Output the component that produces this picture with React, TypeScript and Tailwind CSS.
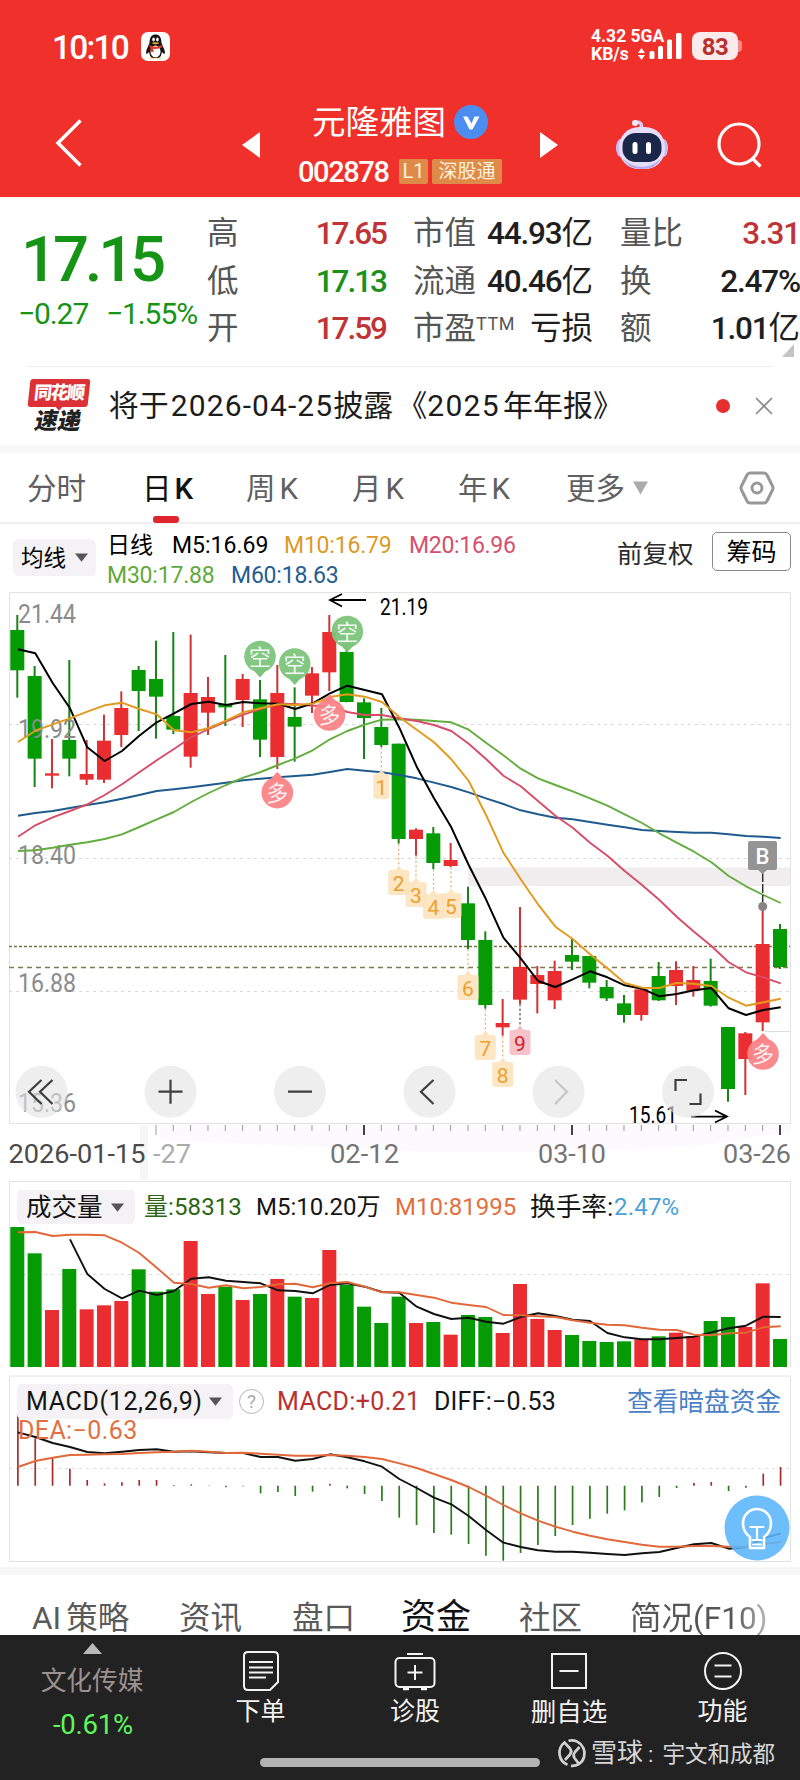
import React from "react";

type Candle = [number, number, number, number, number];

const GREEN = "#049b04";
const RED = "#ea2d30";
const STEP = 17.334;
const cx = (i: number) => 17.3 + STEP * i;

/* up flag, wick top, body top, body bottom, wick bottom (thirds of a pixel) */
const candles: Candle[] = [
  [0, 90, 135, 256, 338], [0, 243, 273, 521, 606], [1, 462, 565, 572, 610], [0, 225, 465, 521, 574],
  [1, 465, 567, 584, 600], [1, 389, 467, 584, 594], [1, 319, 369, 450, 486], [0, 243, 255, 318, 438],
  [0, 167, 282, 335, 461], [0, 141, 393, 434, 447], [1, 149, 324, 515, 548], [1, 276, 336, 383, 450],
  [0, 210, 358, 367, 423], [1, 267, 282, 345, 426], [0, 285, 343, 464, 516], [1, 240, 324, 516, 552],
  [0, 307, 396, 425, 530], [1, 246, 265, 332, 384], [1, 90, 141, 262, 318], [0, 190, 201, 351, 352],
  [0, 340, 352, 399, 522], [0, 369, 426, 480, 486], [0, 476, 476, 762, 776], [1, 730, 734, 762, 812],
  [0, 726, 745, 834, 852], [1, 774, 825, 843, 846], [0, 905, 955, 1065, 1092], [0, 1039, 1065, 1260, 1271],
  [1, 1242, 1314, 1327, 1352], [1, 966, 1146, 1244, 1257], [1, 1143, 1170, 1197, 1285], [1, 1127, 1158, 1246, 1272],
  [0, 1062, 1110, 1130, 1155], [0, 1113, 1113, 1193, 1210], [0, 1185, 1206, 1240, 1248], [0, 1230, 1255, 1290, 1313],
  [1, 1213, 1213, 1290, 1307], [0, 1131, 1173, 1246, 1248], [1, 1129, 1155, 1203, 1260], [1, 1143, 1185, 1217, 1235],
  [0, 1121, 1188, 1262, 1265], [0, 1326, 1326, 1512, 1550], [1, 1341, 1345, 1422, 1530], [1, 966, 1077, 1312, 1338],
  [0, 1017, 1032, 1146, 1152],
];

const m5 = [193, 205, 294, 370, 487, 528, 498, 452, 412, 385, 357, 350, 360, 351, 355, 356, 372, 355, 325, 302, 315, 328, 428, 545, 640, 727, 840, 943, 1058, 1120, 1188, 1206, 1183, 1159, 1177, 1201, 1211, 1234, 1227, 1216, 1209, 1270, 1290, 1275, 1267];
const m10 = [471, 437, 418, 400, 380, 361, 353, 372, 388, 436, 442, 429, 407, 382, 370, 358, 360, 356, 336, 328, 335, 351, 396, 434, 472, 523, 588, 690, 803, 883, 958, 1025, 1062, 1108, 1150, 1194, 1208, 1209, 1194, 1196, 1203, 1238, 1262, 1252, 1241];
const m20 = [755, 721, 697, 678, 658, 630, 598, 562, 526, 492, 457, 432, 410, 389, 372, 356, 357, 362, 362, 381, 390, 390, 400, 408, 420, 438, 476, 522, 572, 604, 648, 692, 728, 773, 812, 858, 900, 945, 995, 1040, 1083, 1132, 1162, 1177, 1195];
const m30 = [798, 796, 788, 779, 772, 762, 748, 726, 703, 681, 651, 624, 600, 578, 561, 540, 520, 496, 463, 438, 419, 404, 403, 404, 408, 412, 434, 473, 511, 551, 580, 600, 619, 640, 662, 688, 714, 745, 773, 800, 832, 873, 904, 930, 954];
const m60 = [692, 684, 678, 669, 660, 652, 641, 630, 618, 613, 607, 600, 593, 586, 581, 577, 573, 569, 561, 552, 557, 562, 570, 580, 593, 606, 622, 640, 657, 676, 688, 698, 703, 711, 719, 727, 735, 738, 741, 743, 743, 748, 753, 755, 759];

const volume = [171, 250, 420, 297, 418, 406, 393, 298, 365, 358, 213, 372, 350, 390, 372, 327, 380, 384, 240, 345, 410, 459, 380, 459, 456, 494, 435, 441, 489, 342, 447, 480, 495, 513, 516, 514, 508, 499, 488, 498, 453, 441, 471, 340, 507];
const vol5 = [208, 312, 357, 385, 362, 375, 363, 326, 322, 332, 336, 340, 361, 363, 370, 345, 340, 350, 366, 368, 410, 432, 447, 443, 455, 461, 441, 430, 438, 449, 453, 489, 502, 508, 508, 504, 500, 487, 475, 467, 440, 441];
const vol10 = [187, 186, 198, 194, 194, 196, 218, 249, 293, 338, 342, 353, 346, 355, 351, 343, 341, 352, 340, 336, 350, 367, 367, 375, 383, 398, 405, 411, 435, 436, 439, 441, 451, 458, 464, 466, 473, 479, 480, 494, 496, 490, 488, 472, 469];

const macd = [733, 805, 862, 896, 930, 940, 937, 930, 930, 945, 943, 946, 952, 949, 970, 966, 978, 965, 941, 955, 972, 993, 1043, 1065, 1089, 1094, 1122, 1157, 1172, 1149, 1125, 1098, 1065, 1046, 1031, 1021, 997, 981, 954, 939, 936, 963, 953, 911, 891];
const diff = [787, 801, 819, 831, 846, 850, 845, 840, 838, 845, 844, 847, 849, 849, 861, 861, 872, 867, 853, 862, 874, 890, 927, 954, 983, 1003, 1038, 1080, 1118, 1131, 1141, 1145, 1145, 1148, 1152, 1155, 1150, 1146, 1134, 1123, 1119, 1136, 1132, 1105, 1090];
const dea = [891, 873, 863, 855, 854, 853, 852, 849, 847, 845, 842, 845, 849, 848, 851, 854, 857, 857, 855, 857, 861, 867, 880, 894, 912, 930, 951, 977, 1005, 1030, 1052, 1070, 1085, 1097, 1108, 1116, 1124, 1130, 1130, 1128, 1128, 1130, 1130, 1122, 1116];

const pts = (base: number, data: number[], start = 0) =>
  data.map((v, i) => `${(cx(i + start) + 0.7).toFixed(1)},${(base + v / 3).toFixed(1)}`).join(" ");

function Line({ base, data, color, start = 0, w = 1.9 }: { base: number; data: number[]; color: string; start?: number; w?: number }) {
  return <polyline points={pts(base, data, start)} fill="none" stroke={color} strokeWidth={w} strokeLinejoin="round" />;
}

function Label({ x, y, w, size = 25, fill = "#8b8b8b", children }: { x: number; y: number; w: number; size?: number; fill?: string; children: string }) {
  return (
    <text x={x} y={y} fontSize={size} fill={fill} textLength={w} lengthAdjust="spacingAndGlyphs">
      {children}
    </text>
  );
}

function Bubble({ x, y, text, up = false }: { x: number; y: number; text: string; up?: boolean }) {
  const fill = up ? "#fa8488" : "#7cc47c";
  return (
    <g>
      <path d={up ? `M${x - 8} ${y - 12}L${x} ${y - 21}L${x + 8} ${y - 12}Z` : `M${x - 8} ${y + 12}L${x} ${y + 21}L${x + 8} ${y + 12}Z`} fill={fill} />
      <circle cx={x} cy={y} r="15.8" fill={fill} opacity="0.95" />
      <text x={x} y={y + 8} fontSize="22" fill="#fff" opacity="0.9" textAnchor="middle">{text}</text>
    </g>
  );
}

function Tag({ x, y, n, from, w = 21, hot = false }: { x: number; y: number; n: string; from: number; w?: number; hot?: boolean }) {
  return (
    <g>
      <path d={`M${x} ${from}V${y}`} stroke={hot ? "#555" : "#dfb88a"} strokeWidth="1.2" strokeDasharray="2.5 2" />
      <path
        d={`M${x} ${y - 3}L${x + 4} ${y + 1}H${x + w / 2 - 2}Q${x + w / 2} ${y + 1} ${x + w / 2} ${y + 3}V${y + 23}Q${x + w / 2} ${y + 26} ${x + w / 2 - 3} ${y + 26}H${x - w / 2 + 3}Q${x - w / 2} ${y + 26} ${x - w / 2} ${y + 23}V${y + 3}Q${x - w / 2} ${y + 1} ${x - w / 2 + 2} ${y + 1}H${x - 4}Z`}
        fill={hot ? "#f6bcc4" : "#fde3bd"} opacity="0.9"
      />
      <text x={x} y={y + 22} fontSize="21" fill={hot ? "#c8242c" : "#eda02c"} textAnchor="middle">{n}</text>
    </g>
  );
}

function Tri({ className }: { className: string }) {
  return (
    <svg viewBox="0 0 14 12" preserveAspectRatio="none" className={className} fill="currentColor">
      <path d="M0 0.5H14L7 11.5Z" />
    </svg>
  );
}

function StatusBar() {
  return (
    <div className="flex h-[86px] items-start pt-[29px] text-white">
      <div className="ml-[52px] mt-[2px] w-[89px] whitespace-nowrap text-[33.500px] font-medium leading-[34px] tracking-[-1.8px]">10:10</div>
      <svg viewBox="0 0 29 29" className="mt-[3px] h-[29px] w-[29px]">
        <rect width="29" height="29" rx="7" fill="#fff" />
        <path d="M8.5 11C8.500 5 11 2.500 14.500 2.500S20.500 5 20.500 11L23.500 18Q24.500 22 23 22L21 20Q20.500 24 18 26H11Q8.500 24 8 20L6 22Q4.500 22 5.500 18Z" fill="#141414" />
        <ellipse cx="14.500" cy="19.500" rx="5" ry="6" fill="#fff" />
        <ellipse cx="12.600" cy="7.500" rx="1.300" ry="2" fill="#fff" />
        <ellipse cx="16.400" cy="7.500" rx="1.300" ry="2" fill="#fff" />
        <path d="M10.500 11Q14.500 9.500 18.500 11Q14.500 13.500 10.500 11Z" fill="#f6b21b" />
        <path d="M8 13Q14.500 16.500 21 13L21.500 15Q17 17.500 12.500 16.800V20H9.500V16Z" fill="#e23a30" />
        <path d="M8 26.500Q11 24.500 14 26.500ZM15 26.500Q18 24.500 21 26.500Z" fill="#f6b21b" />
      </svg>
      <div className="-mt-[1px] ml-[421px] w-[46px] whitespace-nowrap text-[17.500px] font-bold leading-[17px]">
        <div>4.32 5GA</div>
        <div className="mt-[1px]">KB/s</div>
      </div>
      <svg viewBox="0 0 48 32" className="h-[32px] w-[48px]" fill="#fff">
        <path d="M4.500 19L8 24H1ZM4.500 31L8 26H1Z" />
        <rect x="12.500" y="22" width="5" height="8" rx="1.500" />
        <rect x="21" y="17" width="5" height="13" rx="1.500" />
        <rect x="30" y="10.500" width="5" height="19.500" rx="1.500" />
        <rect x="39" y="4" width="5.500" height="26" rx="1.500" />
      </svg>
      <div className="ml-[7px] mt-[3px] flex items-center">
        <div className="flex h-[28px] w-[46px] items-center justify-center rounded-[8px] bg-[#fdeaea] pt-[1px] text-[24px] font-bold leading-none tracking-[-0.5px] text-[#b9302f]">83</div>
        <div className="h-[12px] w-[4px] rounded-r-full bg-[#f58a88]" />
      </div>
    </div>
  );
}

function TitleBar() {
  return (
    <div className="flex h-[111px] items-start text-white">
      <svg viewBox="0 0 28 50" className="ml-[55px] mt-[32px] h-[50px] w-[28px]" fill="none" stroke="#fff" strokeWidth="3.500">
        <path d="M25.500 2.500L3 25L25.500 47.500" />
      </svg>
      <svg viewBox="0 0 18 26" className="ml-[159px] mt-[46px] h-[26px] w-[18px]" fill="#fff"><path d="M18 0V26L0 13Z" /></svg>
      <div className="ml-[38px] flex w-[210px] flex-col">
        <div className="ml-[14px] mt-[18px] flex items-center">
          <div className="w-[142px] whitespace-nowrap pt-[2px] text-[33.500px] leading-[34px]">元隆雅图</div>
          <svg viewBox="0 0 34 34" className="h-[34px] w-[34px]">
            <circle cx="17" cy="17" r="17" fill="#4c8df0" />
            <path d="M9 11.500H13.500L17.500 18.500L20.500 11.500H25.500L18.500 24.500H15.500Z" fill="#fff" />
          </svg>
        </div>
        <div className="mt-[16px] flex items-center">
          <div className="w-[101px] whitespace-nowrap pt-[2px] text-[29px] font-medium leading-[28px] tracking-[-1.4px]">002878</div>
          <div className="flex h-[25px] w-[29px] items-center justify-center rounded-[2px] bg-[#de8b49] text-[20px] leading-none text-[#fff1dc]">L1</div>
          <div className="ml-[4px] flex h-[25px] w-[70px] items-center justify-center whitespace-nowrap rounded-[2px] bg-[#de8b49] text-[19px] leading-none text-[#fff1dc]">深股通</div>
        </div>
      </div>
      <svg viewBox="0 0 18 26" className="ml-[32px] mt-[46px] h-[26px] w-[18px]" fill="#fff"><path d="M0 0V26L18 13Z" /></svg>
      <svg viewBox="0 0 54 52" className="ml-[57px] mt-[33px] h-[52px] w-[54px]">
        <path d="M26 9Q28 3 21 3" fill="none" stroke="#d9cdf5" strokeWidth="3.500" strokeLinecap="round" />
        <circle cx="20" cy="4" r="3" fill="#f3ecff" />
        <ellipse cx="5.500" cy="29" rx="4.500" ry="9" fill="#c9bdf0" />
        <ellipse cx="48.500" cy="29" rx="4.500" ry="9" fill="#c9bdf0" />
        <rect x="4" y="8" width="46" height="42" rx="20" fill="#e4ddfc" />
        <path d="M8 40Q27 56 46 40Q40 50 27 50T8 40Z" fill="#b8a8f0" />
        <rect x="7.500" y="14" width="39" height="29" rx="13" fill="#1b2749" />
        <rect x="17.500" y="23" width="5" height="12" rx="2.500" fill="#fff" />
        <rect x="31" y="23" width="5" height="12" rx="2.500" fill="#fff" />
      </svg>
      <svg viewBox="0 0 48 48" className="ml-[47px] mt-[35px] h-[48px] w-[48px]" fill="none" stroke="#fff" strokeWidth="3.200">
        <circle cx="23" cy="23" r="20" />
        <path d="M36 37L44.500 45.500" />
      </svg>
    </div>
  );
}

const rows = [
  { a: "高", av: "17.65", ac: "text-[#c03437]", b: "市值", bv: "44.93", bu: "亿", c: "量比", cv: "3.31", cu: "", cc: "text-[#c03437]" },
  { a: "低", av: "17.13", ac: "text-[#1b911b]", b: "流通", bv: "40.46", bu: "亿", c: "换", cv: "2.47%", cu: "", cc: "text-[#1f1f1f]" },
  { a: "开", av: "17.59", ac: "text-[#c03437]", b: "市盈", bv: "", bu: "亏损", c: "额", cv: "1.01", cu: "亿", cc: "text-[#1f1f1f]", ttm: true },
];

function Quote() {
  return (
    <div className="relative flex h-[169px] items-start">
      <div className="w-[207px] text-[#169416]">
        <div className="ml-[21px] mt-[30px] whitespace-nowrap text-[63.500px] font-medium leading-[66px] tracking-[-4.2px]">17.15</div>
        <div className="ml-[18px] mt-[5px] flex whitespace-nowrap text-[30px] leading-[32px] tracking-[-1.1px]">
          <div className="w-[88px]">−0.27</div>
          <div>−1.55%</div>
        </div>
      </div>
      <div className="mt-[13px]">
        {rows.map((r) => (
          <div key={r.a} className="flex h-[47.500px] items-center whitespace-nowrap text-[31.500px] leading-none text-[#1f1f1f]">
            <div className="w-[80px] text-[#555]">{r.a}</div>
            <div className={`w-[99px] text-right font-medium tracking-[-2px] ${r.ac}`}>{r.av}</div>
            <div className="ml-[27px] flex w-[70px] text-[#555]">
              {r.b}
              {r.ttm && <span className="text-[18px] leading-[22px] tracking-[0.5px]">TTM</span>}
            </div>
            <div className="w-[110px] text-right">
              <span className="font-medium tracking-[-1.2px]">{r.bv}</span>
              {r.bu}
            </div>
            <div className="ml-[27px] w-[64px] text-[#555]">{r.c}</div>
            <div className={`w-[116px] text-right ${r.cc}`}>
              <span className="font-medium tracking-[-1.2px]">{r.cv}</span>
              {r.cu}
            </div>
          </div>
        ))}
      </div>
      <svg viewBox="0 0 12 13" className="absolute left-[782px] top-[147px] h-[13px] w-[12px]"><path d="M12 0V13H0Z" fill="#c4c4c4" /></svg>
    </div>
  );
}

function Notice() {
  return (
    <div className="mx-[27px] flex h-[79px] items-start border-t border-[#eee]">
      <div className="mt-[12px] flex w-[64px] flex-col items-center">
        <div className="flex h-[28px] w-[60px] -skew-x-6 items-center justify-center rounded-[3px] bg-[#dc3237] text-[18px] font-black leading-none tracking-[-1.5px] text-white">同花顺</div>
        <Tri className="-mt-[1px] h-[5px] w-[8px] text-[#dc3237]" />
        <div className="-ml-[2px] -skew-x-12 whitespace-nowrap text-[23px] font-black leading-[22px] text-[#222]">速递</div>
      </div>
      <div className="ml-[18px] mt-[22px] w-[609px] whitespace-nowrap text-[30px] leading-[34px] text-[#1c1c1c]">
        将于<span className="ml-[2px] tracking-[1.1px]">2026-04-25</span>披露<span className="ml-[4px]">《</span><span className="tracking-[1.3px]">2025</span><span className="ml-[3px]">年年报》</span>
      </div>
      <div className="mt-[32px] h-[14px] w-[14px] shrink-0 rounded-full bg-[#e62e2e]" />
      <svg viewBox="0 0 18 18" className="ml-[25px] mt-[30px] h-[18px] w-[18px] shrink-0" stroke="#8a8a8a" strokeWidth="1.700"><path d="M1 1L17 17M17 1L1 17" /></svg>
    </div>
  );
}

function PeriodTabs() {
  return (
    <div className="flex h-[71px] items-start whitespace-nowrap border-b-2 border-[#f0f0f0] pt-[19px] text-[29.500px] leading-[34px] text-[#606060]">
      <div className="ml-[27px] w-[115px]">分时</div>
      <div className="w-[104px] text-[#111]">
        日<span className="ml-[3px] font-medium">K</span>
        <div className="ml-[11px] mt-[10px] h-[7px] w-[26px] rounded-[3px] bg-[#dd262e]" />
      </div>
      <div className="w-[106px]">周<span className="ml-[4px]">K</span></div>
      <div className="w-[106px]">月<span className="ml-[4px]">K</span></div>
      <div className="w-[108px]">年<span className="ml-[4px]">K</span></div>
      <div className="w-[67px]">更多</div>
      <Tri className="mt-[9px] h-[14px] w-[15px] text-[#ababab]" />
      <svg viewBox="0 0 36 34" className="-mt-[1px] ml-[91px] h-[34px] w-[36px]" fill="none" stroke="#989898" strokeWidth="3">
        <path d="M11 2H25Q27 2 28 4L33.500 15Q34.500 17 33.500 19L28 30Q27 32 25 32H11Q9 32 8 30L2.500 19Q1.500 17 2.500 15L8 4Q9 2 11 2Z" />
        <circle cx="18" cy="17" r="5" />
      </svg>
    </div>
  );
}

function MaRow() {
  return (
    <div className="flex h-[61px] items-start whitespace-nowrap text-[23px] leading-[28px] text-black">
      <div className="ml-[13px] mt-[15px] flex h-[37px] w-[83px] items-center rounded-[6px] bg-[#f4f2f4]">
        <div className="ml-[8px] w-[54px] text-[22.500px]">均线</div>
        <Tri className="h-[9px] w-[13px] text-[#555]" />
      </div>
      <div className="ml-[11px] mt-[8px] w-[510px]">
        <div className="flex">
          <div className="w-[65px] text-[23px]">日线</div>
          <div className="w-[112px]">M5:16.69</div>
          <div className="w-[125px] tracking-[-0.2px] text-[#dc9a26]">M10:16.79</div>
          <div className="tracking-[-0.3px] text-[#d6506c]">M20:16.96</div>
        </div>
        <div className="mt-[2px] flex">
          <div className="w-[124px] tracking-[-0.2px] text-[#62a93c]">M30:17.88</div>
          <div className="tracking-[-0.2px] text-[#245d92]">M60:18.63</div>
        </div>
      </div>
      <div className="mt-[16px] w-[95px] text-[25.500px] text-[#2b2b2b]">前复权</div>
      <div className="mt-[8px] flex h-[39px] w-[79px] items-center justify-center rounded-[5px] border border-[#8a8a8a] pt-[2px] text-[25px]">筹码</div>
    </div>
  );
}

function PriceChart() {
  const B = 585;
  const by = 1091.7;
  return (
    <svg viewBox="0 585 800 596" className="h-[596px] w-[800px] shrink-0">
      <path d="M140 1125H148V1180H140Z" fill="#f7f6f7" />
      <path d="M160 1125H790V1131L700 1146Q480 1156 380 1150L160 1140Z" fill="#fcfafc" />
      <rect x="468" y="867.500" width="322" height="18.500" fill="#f0edef" />
      <path d="M9.500 592.500H790.500V1123.500H9.500Z" fill="none" stroke="#e2e2e2" />
      <g stroke="#d8d8d8" strokeDasharray="3 4">
        <path d="M9 724.500H790M9 858.500H790M9 991.500H790" />
      </g>
      <path d="M765 1031.500H790" stroke="#ddd" />
      <path d="M9 946.500H790" stroke="#7b6f42" strokeWidth="1.300" strokeDasharray="3 2" />
      <path d="M9 967.500H790" stroke="#7b7c50" strokeWidth="1.300" strokeDasharray="5 4" />

      {candles.map(([up, wt, bt, bb, wb], i) => (
        <g key={i} fill={up ? RED : GREEN}>
          <rect x={cx(i) - 1} y={B + wt / 3} width="2" height={(wb - wt) / 3} fill={up ? "#cf3336" : "#178417"} />
          <rect x={cx(i) - 7} y={B + bt / 3} width="14" height={(bb - bt) / 3} />
        </g>
      ))}

      <Label x={18} y={622.500} w={58}>21.44</Label>
      <Label x={18} y={737.500} w={58}>19.92</Label>
      <Label x={18} y={864} w={58}>18.40</Label>
      <Label x={18} y={991.500} w={58}>16.88</Label>
      <Label x={18} y={1112} w={58}>15.36</Label>

      <Line base={B} data={m60} color="#1f5a8c" />
      <Line base={B} data={m30} color="#62ad3e" />
      <Line base={B} data={m20} color="#d84c68" />
      <Line base={B} data={m5} color="#000" w={2} />
      <Line base={B} data={m10} color="#e39a1c" />

      <Bubble x={260} y={656.500} text="空" />
      <Bubble x={294.700} y={664} text="空" />
      <Bubble x={347.300} y={631.500} text="空" />
      <Bubble x={329.500} y={715} text="多" up />
      <Bubble x={277.300} y={792.700} text="多" up />
      <Bubble x={763} y={1054} text="多" up />

      <Tag x={381.300} y={773} from={747} n="1" w={16} />
      <Tag x={398.700} y={869} from={844} n="2" />
      <Tag x={416} y={881} from={856} n="3" />
      <Tag x={433.500} y={893} from={869} n="4" />
      <Tag x={451} y={892} from={867} n="5" />
      <Tag x={468} y={974} from={949} n="6" />
      <Tag x={485.300} y={1034} from={1009} n="7" />
      <Tag x={502.700} y={1061} from={1036} n="8" />
      <Tag x={520} y={1029} from={1004} n="9" hot />

      <path d="M762.700 873V902" stroke="#333" strokeWidth="1.500" strokeDasharray="9 2" />
      <circle cx="762.700" cy="906.500" r="4.500" fill="#858585" />
      <path d="M750 841H775Q777 841 777 843V868Q777 870 775 870H767L762.500 874L758 870H750Q748 870 748 868V843Q748 841 750 841Z" fill="#949494" />
      <text x="762.500" y="863.500" fontSize="22" fontWeight="500" fill="#fff" textAnchor="middle">B</text>

      <g fill="none" stroke="#000" strokeWidth="1.800">
        <path d="M366 600H330M342 594L330 600L342 606.500" />
        <path d="M691 1116.600H727M715 1110.500L727 1116.600L715 1122.500" />
      </g>
      <Label x={380} y={615} w={48} size={23} fill="#000">21.19</Label>
      <Label x={629} y={1123} w={48} size={23} fill="#000">15.61</Label>

      {[41.5, 170.5, 300, 429.5, 558.5, 688].map((x) => (
        <circle key={x} cx={x} cy={by} r="26" fill="#e4e4e4" opacity="0.62" />
      ))}
      <g fill="none" stroke="#3f3f3f" strokeWidth="2.200">
        <path d="M41.500 1080L29 1091.700L41.500 1104M52.500 1080L40 1091.700L52.500 1104" />
        <path d="M158.500 1091.700H182.500M170.500 1079.700V1103.700M288 1091.700H312" />
        <path d="M433.500 1080L421 1091.700L433.500 1104" />
        <path d="M555 1080L567 1091.700L555 1104" stroke="#c6c6c6" />
        <path d="M687 1080H675.500V1091M689.500 1104H700.500V1093.500" />
      </g>

      {candles.map((_, i) =>
        i < 8 ? null : (
          <path
            key={i}
            d={`M${cx(i)} 1125V${i === 8 || i === 20 || i === 32 || i === 44 ? 1135 : 1131}`}
            stroke={i === 20 || i === 32 || i === 44 ? "#444" : "#999"}
            strokeWidth={i === 20 || i === 32 || i === 44 ? 2 : 1}
          />
        ),
      )}
      <Label x={8.500} y={1162.500} w={137} fill="#4a4a4a">2026-01-15</Label>
      <Label x={153} y={1162.500} w={38} fill="#ababab">-27</Label>
      <Label x={330} y={1162.500} w={69} fill="#747474">02-12</Label>
      <Label x={538} y={1162.500} w={68} fill="#747474">03-10</Label>
      <Label x={723} y={1162.500} w={68} fill="#747474">03-26</Label>
    </svg>
  );
}

function VolumePanel() {
  return (
    <div className="relative h-[194px]">
      <svg viewBox="0 1181 800 194" className="absolute left-0 top-0 h-[194px] w-[800px]">
        <path d="M9.500 1367V1181.500H790.500V1367" fill="none" stroke="#e2e2e2" />
        <path d="M9 1274.500H790" stroke="#ddd" strokeDasharray="3 4" />
        {volume.map((v, i) => (
          <rect key={i} x={cx(i) - 7} y={1170 + v / 3} width="14" height={197 - v / 3} fill={candles[i][0] ? RED : GREEN} />
        ))}
        <Line base={1170} data={vol5} start={3} color="#111" />
        <Line base={1170} data={vol10} color="#e2683a" />
      </svg>
      <div className="relative flex items-center whitespace-nowrap pt-[9px] text-[24px] leading-[34px] text-[#151515]">
        <div className="ml-[17px] flex h-[34px] w-[118px] items-center rounded-[5px] bg-[#f4f2f4]">
          <div className="ml-[9px] w-[85px] text-[25.500px]">成交量</div>
          <Tri className="h-[9px] w-[13px] text-[#555]" />
        </div>
        <div className="ml-[9px] w-[112px] text-[#2c6614]"><span className="tracking-[0.1px]">量:58313</span></div>
        <div className="w-[139px]">M5:10.20万</div>
        <div className="w-[135px] text-[#e2703f]">M10:81995</div>
        <div className="w-[84px] text-[25.700px]">换手率:</div>
        <div className="tracking-[0.2px] text-[#4b9fd8]">2.47%</div>
      </div>
    </div>
  );
}

function MacdPanel() {
  return (
    <div className="relative h-[192px]">
      <svg viewBox="0 1375 800 192" className="absolute left-0 top-0 h-[192px] w-[800px]">
        <path d="M9.500 1376H790.500V1561.500H9.500Z" fill="none" stroke="#e2e2e2" />
        <path d="M9 1468.500H790" stroke="#ddd" strokeDasharray="3 4" />
        {macd.map((v, i) => (
          <path key={i} d={`M${cx(i) + 0.6} 1485.700V${1170 + v / 3}`} stroke={v < 947 ? "#a32e30" : "#2c7a1c"} strokeWidth="1.700" />
        ))}
        <Line base={1170} data={diff} color="#111" />
        <Line base={1170} data={dea} color="#e2683a" />
      </svg>
      <div className="relative flex items-center whitespace-nowrap pt-[9px] text-[25px] leading-[34px] text-[#151515]">
        <div className="ml-[17px] flex h-[35px] w-[216px] items-center rounded-[5px] bg-[#f4f2f4]">
          <div className="ml-[9px] w-[183px] tracking-[0.65px]">MACD(12,26,9)</div>
          <Tri className="h-[9px] w-[13px] text-[#555]" />
        </div>
        <div className="ml-[6px] flex h-[25px] w-[25px] items-center justify-center rounded-full border-[1.5px] border-[#b5b5b5] text-[19px] leading-none text-[#aaa]">?</div>
        <div className="ml-[13px] w-[157px] text-[#b8312f]"><span className="tracking-[0.35px]">MACD:+0.21</span></div>
        <div className="w-[193px] tracking-[0.2px]">DIFF:−0.53</div>
        <div className="text-[25.700px] text-[#4a80c6]">查看暗盘资金</div>
      </div>
      <div className="relative -mt-[2px] ml-[18px] whitespace-nowrap text-[25px] leading-[28px] tracking-[0.4px] text-[#e2703f]">DEA:−0.63</div>
      <svg viewBox="0 0 66 66" className="absolute left-[724px] top-[120px] h-[66px] w-[66px]" fill="none" stroke="#fff" strokeLinecap="round">
        <circle cx="33" cy="33" r="32.500" fill="#5ab5fc" fillOpacity="0.88" stroke="none" />
        <path d="M26 53V42Q19 37 19 28A14 14 0 0 1 47 28Q47 37 40 42V53Z" strokeWidth="2.600" strokeLinejoin="round" />
        <path d="M26.500 32H39.500M33 32V45M28.500 45H37.500M29 49.500H37" strokeWidth="2.200" />
      </svg>
    </div>
  );
}

function InfoTabs() {
  return (
    <div className="flex h-[68px] items-start whitespace-nowrap border-t-8 border-[#f7f7f7] pt-[26px] text-[31.500px] leading-[35px] text-[#5a5a5a]">
      <div className="ml-[32px] w-[147px]">AI<span className="ml-[5px]">策略</span></div>
      <div className="w-[113px]">资讯</div>
      <div className="w-[109px]">盘口</div>
      <div className="w-[118px] text-[35px] leading-[34px] text-[#111]">资金</div>
      <div className="w-[111px]">社区</div>
      <div className="h-[34px] bg-gradient-to-r from-[#555] from-75% to-[#bbb] bg-clip-text text-transparent">简况(F10)</div>
    </div>
  );
}

function BottomBar() {
  return (
    <div className="flex h-[145px] flex-col bg-[#222] text-[25px] leading-[28px] text-[#f3f3f3]">
      <div className="flex h-[103px] items-start whitespace-nowrap">
        <div className="flex w-[184px] flex-col items-center">
          <svg viewBox="0 0 19 11" className="mt-[8px] h-[11px] w-[19px]" fill="#b9b9b9"><path d="M9.500 0L19 11H0Z" /></svg>
          <div className="mt-[13px] text-[25.700px] text-[#9c918f]">文化传媒</div>
          <div className="mt-[16px] pl-[2px] text-[27.500px] tracking-[-0.2px] text-[#5df75d]">-0.61%</div>
        </div>
        <div className="flex w-[153px] flex-col items-center">
          <svg viewBox="0 0 36 40" className="mt-[16px] h-[40px] w-[36px]" fill="none" stroke="#f3f3f3" strokeWidth="2">
            <path d="M5 1H31Q35 1 35 5V31L27 39H5Q1 39 1 35V5Q1 1 5 1Z" />
            <path d="M6 11H30M6 16.500H30M6 21.500H30M6 26.500H23" />
          </svg>
          <div className="mt-[7px]">下单</div>
        </div>
        <div className="flex w-[156px] flex-col items-center">
          <svg viewBox="0 0 42 40" className="mt-[16px] h-[40px] w-[42px]" fill="none" stroke="#f3f3f3" strokeWidth="2">
            <rect x="1.500" y="7" width="39" height="29" rx="4" />
            <path d="M13 3H29M21 14V29M13.500 21.500H28.500" />
            <path d="M9 38H15M27 38H33" strokeWidth="2.500" />
          </svg>
          <div className="mt-[7px]">诊股</div>
        </div>
        <div className="flex w-[152px] flex-col items-center">
          <svg viewBox="0 0 36 36" className="mt-[18px] h-[36px] w-[36px]" fill="none" stroke="#f3f3f3" strokeWidth="2">
            <path d="M1 1H35V35H1ZM8.500 18H27.500" />
          </svg>
          <div className="mt-[9px] text-[25.500px]">删自选</div>
        </div>
        <div className="flex w-[155px] flex-col items-center">
          <svg viewBox="0 0 38 38" className="mt-[17px] h-[38px] w-[38px]" fill="none" stroke="#f3f3f3" strokeWidth="2">
            <circle cx="19" cy="19" r="18" />
            <path d="M10.500 13.500H27.500M10.500 24.500H27.500" />
          </svg>
          <div className="mt-[8px]">功能</div>
        </div>
      </div>
      <div className="flex h-[30px] items-center">
        <div className="ml-[260px] mt-[19px] h-[9px] w-[280px] rounded-full bg-[#b3b3b3]" />
        <svg viewBox="0 0 30 30" className="ml-[17px] h-[30px] w-[30px]" fill="none" stroke="#d2d2d2" strokeWidth="2.700">
          <path d="M10.500 26.800A13 13 0 0 1 7.500 4.500L13 10.500Q15.500 13.500 13 16.500L8 22" />
          <path d="M11.500 2.700A13 13 0 0 1 22 26L17.500 20Q15.500 17 18 14L22.500 9M14 27.800A13 13 0 0 0 22 26" />
        </svg>
        <div className="ml-[4px] whitespace-nowrap pt-[1px] text-[22.500px] text-[#d6d6d6]"><span className="text-[26px]">雪球</span><span className="ml-[5px] mr-[9px]">:</span>宇文和成都</div>
      </div>
    </div>
  );
}

export default function App() {
  return (
    <div className="flex h-[1780px] w-[800px] flex-col overflow-hidden bg-white font-[Roboto,'Noto_Sans_CJK_SC',sans-serif]">
      <div className="h-[197px] bg-[#f0312b]">
        <StatusBar />
        <TitleBar />
      </div>
      <Quote />
      <Notice />
      <div className="h-[8px] bg-[#f7f7f7]" />
      <PeriodTabs />
      <MaRow />
      <PriceChart />
      <VolumePanel />
      <MacdPanel />
      <InfoTabs />
      <BottomBar />
    </div>
  );
}
